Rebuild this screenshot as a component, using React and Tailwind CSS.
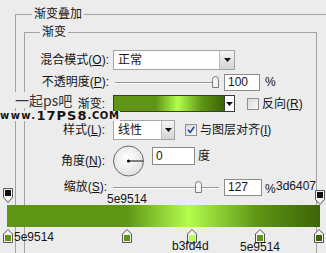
import React from "react";

const Caret = () => (
  <svg width="7" height="4" viewBox="0 0 7 4">
    <path d="M0 0h7L3.5 4z" fill="#111" />
  </svg>
);

const Thumb = ({ className }) => (
  <svg width="7" height="12" viewBox="0 0 7 12" className={className}>
    <path d="M0.5 3.5Q0.5 0.5 3.5 0.5Q6.5 0.5 6.5 3.5V11.5H0.5Z" fill="#f3f3f3" stroke="#7b7b7b" />
  </svg>
);

const Checkbox = ({ checked }) => (
  <svg width="12" height="12" viewBox="0 0 12 12">
    <defs>
      <linearGradient id="cb" x1="0" y1="0" x2="1" y2="1">
        <stop offset="0" stopColor="#d8d8d8" />
        <stop offset="1" stopColor="#fbfbfb" />
      </linearGradient>
    </defs>
    <rect x="0.5" y="0.5" width="11" height="11" fill="url(#cb)" stroke="#8f8f8f" />
    {checked && <path d="M3 5.8L5.2 8.4L9.2 2.8" fill="none" stroke="#2a4a9e" strokeWidth="1.7" />}
  </svg>
);

// opacity stop above the bar
const TopStop = ({ className }) => (
  <svg width="10" height="15" viewBox="0 0 10 15" className={className}>
    <path d="M0.5 0.5H9.5V9.5L5 14.5L0.5 9.5Z" fill="#f2f2f2" stroke="#555" />
    <rect x="2" y="2" width="6" height="6" fill="#111" />
  </svg>
);

// colour stop under the bar
const ColorStop = ({ color, left }) => (
  <svg width="10" height="14" viewBox="0 0 10 14" className={`absolute top-[53px] ${left}`}>
    <path d="M5 0.5L9.5 5V13.5H0.5V5Z" fill="#f2f2f2" stroke="#555" />
    <rect x="2" y="6" width="6" height="6" fill={color} />
  </svg>
);

const Dial = () => (
  <svg width="31" height="32" viewBox="0 0 31 32">
    <defs>
      <radialGradient id="dial" cx="0.45" cy="0.4" r="0.6">
        <stop offset="0" stopColor="#ffffff" />
        <stop offset="1" stopColor="#e2e2e2" />
      </radialGradient>
    </defs>
    <circle cx="15.5" cy="16" r="15" fill="url(#dial)" stroke="#6a6a6a" />
    <line x1="15.5" y1="16" x2="30" y2="16" stroke="#111" strokeWidth="1" />
    <circle cx="15.5" cy="16" r="1.6" fill="#111" />
  </svg>
);

const gradient =
  "bg-[linear-gradient(to_right,#5e9514_0%,#5e9514_38%,#b3fd4d_58%,#5e9514_80%,#3d6407_100%)]";

export default function App() {
  return (
    <div className="relative h-[253px] w-[326px] overflow-hidden bg-[#ececec] font-['Liberation_Sans','Noto_Sans_CJK_SC',sans-serif] text-[12px] leading-4 text-[#141414]">
      <fieldset className="ml-[15px] mt-[6px] w-[330px] border-l border-t border-[#a3a3a3]">
        <legend className="ml-[16px] px-[2px] leading-4">渐变叠加</legend>
        <fieldset className="ml-[8px] mt-[2px] h-[260px] w-[293px] border border-[#a3a3a3]">
          <legend className="ml-[15px] px-[2px] leading-4">渐变</legend>

          {/* blend mode */}
          <div className="mt-[10px] flex h-[20px] items-center">
            <span className="w-[84px] text-right">
              混合模式(<u>O</u>):
            </span>
            <div className="ml-[4px] flex h-[20px] w-[122px] border border-[#a5a5a5] bg-white">
              <span className="flex-1 pl-[4px] leading-[18px]">正常</span>
              <span className="flex w-[15px] items-center justify-center border-l border-[#bdbdbd] bg-gradient-to-b from-[#f4f4f4] to-[#d4d4d4]">
                <Caret />
              </span>
            </div>
          </div>

          {/* opacity */}
          <div className="mt-[3px] flex h-[18px] items-center">
            <span className="w-[84px] text-right">
              不透明度(<u>P</u>):
            </span>
            <div className="relative ml-[4px] h-[18px] w-[106px]">
              <div className="absolute left-[2px] right-[6px] top-[9px] h-[2px] border-b border-t border-b-white border-t-[#9a9a9a]" />
              <Thumb className="absolute right-0 top-[3px]" />
            </div>
            <div className="ml-[5px] h-[17px] w-[36px] border border-[#8c8c8c] bg-white pl-[3px] leading-[15px]">100</div>
            <span className="ml-[5px]">%</span>
          </div>

          {/* gradient */}
          <div className="mt-[4px] flex h-[17px] items-center">
            <span className="w-[84px] pr-[4px] text-right leading-[14px]">渐变:</span>
            <div className={`ml-[4px] h-[17px] w-[112px] border border-[#3a3a3a] ${gradient}`} />
            <span className="flex h-[17px] w-[10px] items-center justify-center border border-l-0 border-[#3a3a3a] bg-white">
              <Caret />
            </span>
            <span className="ml-[12px] flex">
              <Checkbox />
            </span>
            <span className="ml-[3px]">
              反向(<u>R</u>)
            </span>
          </div>

          {/* style */}
          <div className="mt-[8px] flex h-[20px] items-center">
            <span className="w-[84px] pr-[4px] text-right">
              样式(<u>L</u>):
            </span>
            <div className="ml-[4px] flex h-[20px] w-[62px] border border-[#a5a5a5] bg-white">
              <span className="flex-1 pl-[4px] leading-[18px]">线性</span>
              <span className="flex w-[13px] items-center justify-center border-l border-[#bdbdbd] bg-gradient-to-b from-[#f4f4f4] to-[#d4d4d4]">
                <Caret />
              </span>
            </div>
            <span className="ml-[10px] flex">
              <Checkbox checked />
            </span>
            <span className="ml-[3px]">
              与图层对齐(<u>I</u>)
            </span>
          </div>

          {/* angle */}
          <div className="mt-[5px] flex h-[32px] items-center">
            <span className="w-[84px] pr-[4px] text-right">
              角度(<u>N</u>):
            </span>
            <div className="ml-[4px] flex">
              <Dial />
            </div>
            <div className="mb-[10px] ml-[8px] h-[18px] w-[43px] border border-[#8c8c8c] bg-white pl-[3px] leading-[16px]">0</div>
            <span className="mb-[10px] ml-[3px]">度</span>
          </div>

          {/* scale */}
          <div className="mt-[1px] flex h-[18px] items-center">
            <span className="w-[84px] pr-[2px] text-right">
              缩放(<u>S</u>):
            </span>
            <div className="relative ml-[4px] h-[18px] w-[106px]">
              <div className="absolute left-0 right-0 top-[9px] h-[2px] border-b border-t border-b-white border-t-[#9a9a9a]" />
              <Thumb className="absolute left-[82px] top-[3px]" />
            </div>
            <div className="ml-[5px] h-[17px] w-[38px] border border-[#8c8c8c] bg-white pl-[3px] leading-[15px]">127</div>
            <span className="ml-[3px] mt-[4px] leading-[12px]">%</span>
          </div>
        </fieldset>
      </fieldset>

      {/* watermark */}
      <div className="absolute left-0 top-[92px] flex flex-col items-start">
        <span className="ml-[14px] bg-[#ececec] px-[1px] font-['Noto_Sans_CJK_SC',sans-serif] text-[14px] leading-[16px] text-[#363636]">一起ps吧</span>
        <span className="mt-[3px] flex items-end bg-[#ececec] font-['DejaVu_Sans',sans-serif] font-black leading-[10px] text-[#151515]">
          <span className="text-[10px] tracking-[1.4px]">www.</span>
          <span className="text-[13px] tracking-[1px]">17PS8</span>
          <span className="text-[10px] uppercase tracking-[0.6px]">.com</span>
        </span>
      </div>

      {/* gradient editor */}
      <div className="absolute left-0 top-[176px] h-[77px] w-[326px] pl-[7px] pt-[29px]">
        <span className="absolute left-[276px] top-[4px] leading-[12px]">3d6407</span>
        <TopStop className="absolute left-[3px] top-[12px]" />
        <TopStop className="absolute left-[315px] top-[14px]" />
        <span className="absolute left-[107px] top-[17px] leading-[12px]">5e9514</span>
        <div className={`h-[22px] w-[313px] ${gradient}`} />
        <ColorStop color="#5e9514" left="left-[3px]" />
        <ColorStop color="#5e9514" left="left-[122px]" />
        <ColorStop color="#b3fd4d" left="left-[187px]" />
        <ColorStop color="#5e9514" left="left-[255px]" />
        <ColorStop color="#3d6407" left="left-[314px]" />
        <span className="absolute left-[14px] top-[55px] leading-[12px]">5e9514</span>
        <span className="absolute left-[172px] top-[64px] leading-[12px]">b3fd4d</span>
        <span className="absolute left-[240px] top-[65px] leading-[12px]">5e9514</span>
      </div>
    </div>
  );
}
